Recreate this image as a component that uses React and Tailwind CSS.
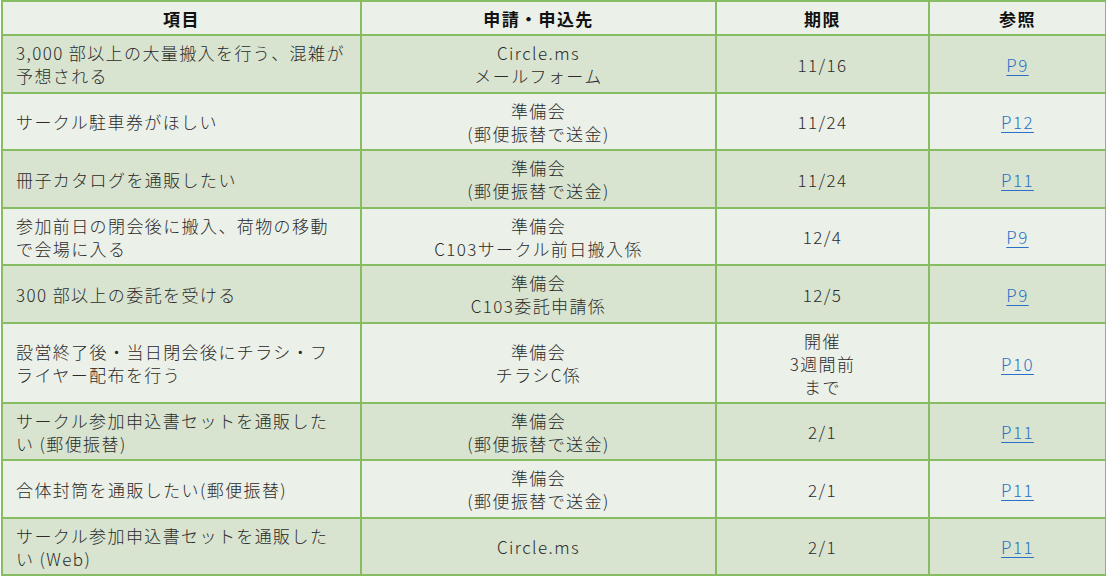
import React from 'react';

const rows = [
  { item: ['3,000 部以上の大量搬入を行う、混雑が', '予想される'], dest: ['Circle.ms', 'メールフォーム'], due: ['11/16'], ref: 'P9', h: 'h-[58px]' },
  { item: ['サークル駐車券がほしい'], dest: ['準備会', '(郵便振替で送金)'], due: ['11/24'], ref: 'P12', h: 'h-[57px]' },
  { item: ['冊子カタログを通販したい'], dest: ['準備会', '(郵便振替で送金)'], due: ['11/24'], ref: 'P11', h: 'h-[58px]' },
  { item: ['参加前日の閉会後に搬入、荷物の移動', 'で会場に入る'], dest: ['準備会', 'C103サークル前日搬入係'], due: ['12/4'], ref: 'P9', h: 'h-[57px]' },
  { item: ['300 部以上の委託を受ける'], dest: ['準備会', 'C103委託申請係'], due: ['12/5'], ref: 'P9', h: 'h-[58px]' },
  { item: ['設営終了後・当日閉会後にチラシ・フ', 'ライヤー配布を行う'], dest: ['準備会', 'チラシC係'], due: ['開催', '3週間前', 'まで'], ref: 'P10', h: 'h-[80px]' },
  { item: ['サークル参加申込書セットを通販した', 'い (郵便振替)'], dest: ['準備会', '(郵便振替で送金)'], due: ['2/1'], ref: 'P11', h: 'h-[57px]' },
  { item: ['合体封筒を通販したい(郵便振替)'], dest: ['準備会', '(郵便振替で送金)'], due: ['2/1'], ref: 'P11', h: 'h-[58px]' },
  { item: ['サークル参加申込書セットを通販した', 'い (Web)'], dest: ['Circle.ms'], due: ['2/1'], ref: 'P11', h: 'h-[57px]' },
];

const Lines = ({ lines }) =>
  lines.map((l, i) => (
    <div key={i} className="whitespace-nowrap">
      {l}
    </div>
  ));

export default function App() {
  return (
    <div
      className="w-[1106px] h-[577px] bg-white text-[#2b2b2b]"
      style={{ fontFamily: '"Noto Sans CJK JP", "Noto Sans", sans-serif' }}
    >
      <table className="ml-[1px] w-[1104px] table-fixed border-collapse text-[17px] leading-[23px] tracking-[1.4px] font-light">
        <colgroup>
          <col className="w-[359px]" />
          <col className="w-[355px]" />
          <col className="w-[213px]" />
          <col className="w-[177px]" />
        </colgroup>
        <thead>
          <tr className="h-[34px] bg-[#ebf0e8]">
            {['項目', '申請・申込先', '期限', '参照'].map((t) => (
              <th key={t} className="border-2 border-[#86bd62] text-center font-bold text-[#111]">
                {t}
              </th>
            ))}
          </tr>
        </thead>
        <tbody>
          {rows.map((r, i) => (
            <tr key={i} className={`${r.h} ${i % 2 === 0 ? 'bg-[#d8e4d0]' : 'bg-[#ebf0e8]'}`}>
              <td className="border-2 border-[#86bd62] pl-[13px] align-middle">
                <Lines lines={r.item} />
              </td>
              <td className="border-2 border-[#86bd62] text-center align-middle">
                <Lines lines={r.dest} />
              </td>
              <td className="border-2 border-[#86bd62] text-center align-middle">
                <Lines lines={r.due} />
              </td>
              <td className="border-2 border-[#86bd62] text-center align-middle">
                <a href="#" className="text-[#2a70c6] underline underline-offset-[3px]">
                  {r.ref}
                </a>
              </td>
            </tr>
          ))}
        </tbody>
      </table>
    </div>
  );
}
